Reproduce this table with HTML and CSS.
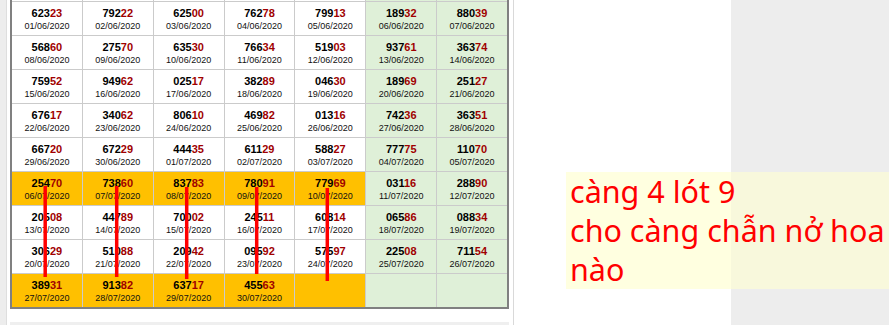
FILE: index.html
```html
<!DOCTYPE html>
<html lang="vi">
<head>
<meta charset="utf-8">
<title>Bảng kết quả</title>
<link rel="stylesheet" href="styles.css">
</head>
<body>
<div class="shell">
  <div class="page">
    <main class="main">
      <div class="board">
        <div class="grid">
          <div class="cell hd"></div>
          <div class="cell hd"></div>
          <div class="cell hd"></div>
          <div class="cell hd"></div>
          <div class="cell hd"></div>
          <div class="cell hd we"></div>
          <div class="cell hd we"></div>

          <div class="cell"><span class="num">623<span class="t">23</span></span><span class="date">01/06/2020</span></div>
          <div class="cell"><span class="num">792<span class="t">22</span></span><span class="date">02/06/2020</span></div>
          <div class="cell"><span class="num">625<span class="t">00</span></span><span class="date">03/06/2020</span></div>
          <div class="cell"><span class="num">762<span class="t">78</span></span><span class="date">04/06/2020</span></div>
          <div class="cell"><span class="num">799<span class="t">13</span></span><span class="date">05/06/2020</span></div>
          <div class="cell we"><span class="num">189<span class="t">32</span></span><span class="date">06/06/2020</span></div>
          <div class="cell we"><span class="num">880<span class="t">39</span></span><span class="date">07/06/2020</span></div>

          <div class="cell"><span class="num">568<span class="t">60</span></span><span class="date">08/06/2020</span></div>
          <div class="cell"><span class="num">275<span class="t">70</span></span><span class="date">09/06/2020</span></div>
          <div class="cell"><span class="num">635<span class="t">30</span></span><span class="date">10/06/2020</span></div>
          <div class="cell"><span class="num">766<span class="t">34</span></span><span class="date">11/06/2020</span></div>
          <div class="cell"><span class="num">519<span class="t">03</span></span><span class="date">12/06/2020</span></div>
          <div class="cell we"><span class="num">937<span class="t">61</span></span><span class="date">13/06/2020</span></div>
          <div class="cell we"><span class="num">363<span class="t">74</span></span><span class="date">14/06/2020</span></div>

          <div class="cell"><span class="num">759<span class="t">52</span></span><span class="date">15/06/2020</span></div>
          <div class="cell"><span class="num">949<span class="t">62</span></span><span class="date">16/06/2020</span></div>
          <div class="cell"><span class="num">025<span class="t">17</span></span><span class="date">17/06/2020</span></div>
          <div class="cell"><span class="num">382<span class="t">89</span></span><span class="date">18/06/2020</span></div>
          <div class="cell"><span class="num">046<span class="t">30</span></span><span class="date">19/06/2020</span></div>
          <div class="cell we"><span class="num">189<span class="t">69</span></span><span class="date">20/06/2020</span></div>
          <div class="cell we"><span class="num">251<span class="t">27</span></span><span class="date">21/06/2020</span></div>

          <div class="cell"><span class="num">676<span class="t">17</span></span><span class="date">22/06/2020</span></div>
          <div class="cell"><span class="num">340<span class="t">62</span></span><span class="date">23/06/2020</span></div>
          <div class="cell"><span class="num">806<span class="t">10</span></span><span class="date">24/06/2020</span></div>
          <div class="cell"><span class="num">469<span class="t">82</span></span><span class="date">25/06/2020</span></div>
          <div class="cell"><span class="num">013<span class="t">16</span></span><span class="date">26/06/2020</span></div>
          <div class="cell we"><span class="num">742<span class="t">36</span></span><span class="date">27/06/2020</span></div>
          <div class="cell we"><span class="num">363<span class="t">51</span></span><span class="date">28/06/2020</span></div>

          <div class="cell"><span class="num">667<span class="t">20</span></span><span class="date">29/06/2020</span></div>
          <div class="cell"><span class="num">672<span class="t">29</span></span><span class="date">30/06/2020</span></div>
          <div class="cell"><span class="num">444<span class="t">35</span></span><span class="date">01/07/2020</span></div>
          <div class="cell"><span class="num">611<span class="t">29</span></span><span class="date">02/07/2020</span></div>
          <div class="cell"><span class="num">588<span class="t">27</span></span><span class="date">03/07/2020</span></div>
          <div class="cell we"><span class="num">777<span class="t">75</span></span><span class="date">04/07/2020</span></div>
          <div class="cell we"><span class="num">110<span class="t">70</span></span><span class="date">05/07/2020</span></div>

          <div class="cell hot"><span class="num">254<span class="t">70</span></span><span class="date">06/07/2020</span></div>
          <div class="cell hot"><span class="num">738<span class="t">60</span></span><span class="date">07/07/2020</span></div>
          <div class="cell hot"><span class="num">837<span class="t">83</span></span><span class="date">08/07/2020</span></div>
          <div class="cell hot"><span class="num">780<span class="t">91</span></span><span class="date">09/07/2020</span></div>
          <div class="cell hot"><span class="num">779<span class="t">69</span></span><span class="date">10/07/2020</span></div>
          <div class="cell we"><span class="num">031<span class="t">16</span></span><span class="date">11/07/2020</span></div>
          <div class="cell we"><span class="num">288<span class="t">90</span></span><span class="date">12/07/2020</span></div>

          <div class="cell"><span class="num">205<span class="t">08</span></span><span class="date">13/07/2020</span></div>
          <div class="cell"><span class="num">447<span class="t">89</span></span><span class="date">14/07/2020</span></div>
          <div class="cell"><span class="num">700<span class="t">02</span></span><span class="date">15/07/2020</span></div>
          <div class="cell"><span class="num">245<span class="t">11</span></span><span class="date">16/07/2020</span></div>
          <div class="cell"><span class="num">608<span class="t">14</span></span><span class="date">17/07/2020</span></div>
          <div class="cell we"><span class="num">065<span class="t">86</span></span><span class="date">18/07/2020</span></div>
          <div class="cell we"><span class="num">088<span class="t">34</span></span><span class="date">19/07/2020</span></div>

          <div class="cell"><span class="num">306<span class="t">29</span></span><span class="date">20/07/2020</span></div>
          <div class="cell"><span class="num">510<span class="t">88</span></span><span class="date">21/07/2020</span></div>
          <div class="cell"><span class="num">209<span class="t">42</span></span><span class="date">22/07/2020</span></div>
          <div class="cell"><span class="num">095<span class="t">92</span></span><span class="date">23/07/2020</span></div>
          <div class="cell"><span class="num">575<span class="t">97</span></span><span class="date">24/07/2020</span></div>
          <div class="cell we"><span class="num">225<span class="t">08</span></span><span class="date">25/07/2020</span></div>
          <div class="cell we"><span class="num">711<span class="t">54</span></span><span class="date">26/07/2020</span></div>

          <div class="cell hot"><span class="num">389<span class="t">31</span></span><span class="date">27/07/2020</span></div>
          <div class="cell hot"><span class="num">913<span class="t">82</span></span><span class="date">28/07/2020</span></div>
          <div class="cell hot"><span class="num">637<span class="t">17</span></span><span class="date">29/07/2020</span></div>
          <div class="cell hot"><span class="num">455<span class="t">63</span></span><span class="date">30/07/2020</span></div>
          <div class="cell hot"></div>
          <div class="cell we"></div>
          <div class="cell we"></div>
        </div>
      </div>
      <div class="below"></div>
    </main>
    <aside class="side"></aside>
  </div>
</div>

<div class="note">càng 4 lót 9<br>cho càng chẫn nở hoa<br>nào</div>

<svg class="marks" width="889" height="325" viewBox="0 0 889 325" aria-hidden="true">
  <line x1="45.2" y1="186" x2="45.2" y2="277" />
  <line x1="116.7" y1="186" x2="116.7" y2="277" />
  <line x1="186.7" y1="187" x2="186.7" y2="279" />
  <line x1="256.7" y1="187" x2="256.7" y2="274" />
  <line x1="327.3" y1="188" x2="327.3" y2="281" />
</svg>
</body>
</html>
```

FILE: styles.css
```css
html, body {
  margin: 0;
  padding: 0;
}

body {
  position: relative;
  width: 889px;
  height: 325px;
  overflow: hidden;
  background: #ededed;
  font-family: "Liberation Sans", Arial, sans-serif;
}

.shell {
  display: flex;
  height: 325px;
}

.page {
  display: flex;
  width: 724px;
  margin-left: 6px;
  border-left: 1px solid #dedede;
  background: #fff;
}

.main {
  width: 506px;
  box-sizing: border-box;
  padding-left: 3px;
}

.side {
  flex: 1;
  border-left: 1px solid #d9d9d9;
}

.board {
  width: 499px;
  box-sizing: border-box;
  margin-top: -32px;
  border: 2px solid #808080;
  border-top: 0;
}

.grid {
  display: grid;
  grid-template-columns: repeat(7, 1fr);
  grid-auto-rows: 33px;
  gap: 1px;
  background: #cbcbcb;
}

.cell {
  box-sizing: border-box;
  padding-top: 5px;
  background: #fff;
  text-align: center;
}

.cell.we {
  background: #dff0d8;
}

.cell.hot {
  background: #ffc000;
}

.num {
  display: block;
  font-size: 11px;
  font-weight: bold;
  line-height: 13px;
  color: #000;
}

.num .t {
  color: #a00000;
}

.date {
  display: block;
  font-size: 9px;
  line-height: 12px;
  color: #111;
}

.below {
  width: 499px;
  height: 3px;
  margin-top: 13px;
  background: #efefef;
}

.note {
  position: absolute;
  left: 566px;
  top: 172px;
  width: 323px;
  height: 117px;
  box-sizing: border-box;
  padding-left: 4px;
  background: linear-gradient(to right, #ffffe0 165px, #f8f8dc 165px);
  color: #ff0000;
  font-family: "Noto Sans", "DejaVu Sans", sans-serif;
  font-size: 30.5px;
  line-height: 39px;
  white-space: nowrap;
}

.marks {
  position: absolute;
  left: 0;
  top: 0;
  pointer-events: none;
}

.marks line {
  stroke: #ff0000;
  stroke-width: 3.5;
}
```
